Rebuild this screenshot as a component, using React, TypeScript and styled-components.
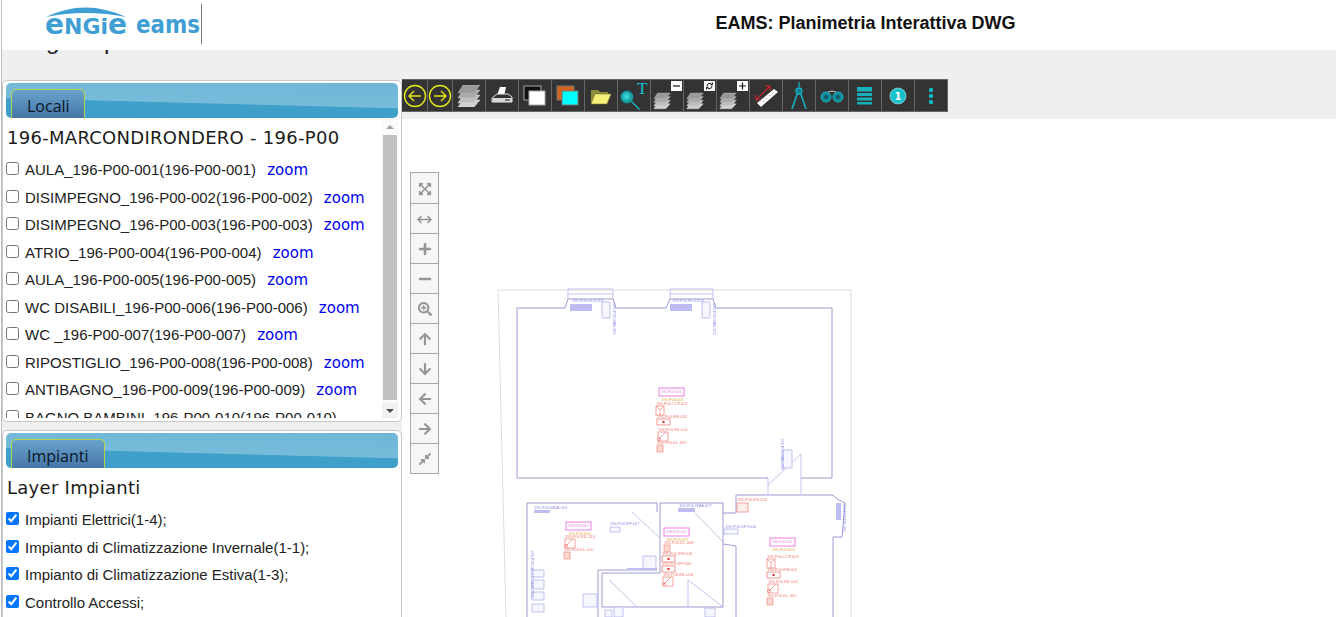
import React from 'react';
import styled, { createGlobalStyle } from 'styled-components';
import {
  FaArrowDown,
  FaArrowLeft,
  FaArrowRight,
  FaArrowUp,
  FaCompressAlt,
  FaExpandArrowsAlt,
  FaMinus,
  FaPlus,
  FaSearchPlus,
} from 'react-icons/fa';
import { TbArrowsHorizontal } from 'react-icons/tb';

const GlobalStyle = createGlobalStyle`
  html, body {
    margin: 0;
    padding: 0;
    height: 100%;
    overflow: hidden;
    background: #fff;
  }
  * { box-sizing: border-box; }
`;

const Page = styled.div`
  width: 1335px;
  height: 617px;
  margin-left: 1px;
  overflow: hidden;
  display: flex;
  flex-direction: column;
  border-left: 1px solid #bdbdbd;
  font-family: 'Liberation Sans', Arial, sans-serif;
`;

const Header = styled.header`
  flex: 0 0 50px;
  display: flex;
  align-items: flex-start;
  background: #fff;
`;

const LogoBox = styled.div`
  flex: 0 0 200px;
  height: 40px;
  margin-top: 4px;
  padding-left: 43px;
  border-right: 1px solid #777;
`;

const Title = styled.h1`
  flex: 1;
  margin: 13px 0 0;
  padding-left: 193px;
  text-align: center;
  font-size: 18px;
  line-height: 20px;
  font-weight: bold;
  color: #111;
`;

const Body = styled.div`
  flex: 1;
  display: flex;
  min-height: 0;
`;

const Sidebar = styled.aside`
  flex: 0 0 400px;
  display: flex;
  flex-direction: column;
  gap: 8px;
  background: #efefef;
  overflow: hidden;
`;

const ClippedHeading = styled.div`
  flex: none;
  height: 22px;
  overflow: hidden;
  padding-left: 44px;
  font-size: 24px;
  line-height: 24px;
  color: #222;
  word-spacing: 38px;
`;

const ClippedText = styled.div`
  margin-top: -21px;
`;

const Panel = styled.section<{ $height?: number }>`
  flex: ${({ $height }) => ($height ? `0 0 ${$height}px` : '0 0 300px')};
  background: #fff;
  border: 1px solid #c8c8c8;
  border-radius: 5px;
  padding: 2px 3px 3px;
  display: flex;
  flex-direction: column;
  overflow: hidden;
`;

const PanelBar = styled.div`
  flex: 0 0 35px;
  padding: 6px 0 0 5px;
  border-radius: 5px;
  display: flex;
  background: linear-gradient(181.5deg, #6fb5d6 0, #76bcda 55%, #3fa0ca 57%, #3d9dc8 100%);
`;

const Tab = styled.div<{ $width: number }>`
  width: ${({ $width }) => $width}px;
  height: 29px;
  padding: 5px 0 0 15px;
  border: 1px solid #b6d44a;
  border-bottom: 0;
  border-radius: 5px 5px 0 0;
  background: linear-gradient(#69a3cb, #4475a8);
  font-family: 'Open Sans', sans-serif;
  font-size: 16px;
  line-height: 22px;
  color: #0c1622;
`;

const ScrollArea = styled.div`
  flex: 1;
  display: flex;
  min-height: 0;
`;

const PanelContent = styled.div`
  flex: 1;
  min-width: 0;
  overflow: hidden;
`;

const PanelTitle = styled.h2`
  margin: 10px 0 8px 1px;
  font-family: 'DejaVu Sans', Verdana, sans-serif;
  font-size: 18px;
  line-height: 20px;
  font-weight: normal;
  letter-spacing: 0.28px;
  color: #1b1b1b;
`;

const Row = styled.label`
  display: block;
  height: 27.5px;
  line-height: 27.5px;
  font-size: 15px;
  color: #222;
`;

const RowName = styled.span`
  white-space: nowrap;
`;

const Check = styled.input.attrs({ type: 'checkbox' })`
  width: 13px;
  height: 13px;
  margin: 0 6px 0 0;
  vertical-align: 0;
  accent-color: #0075ff;
`;

const ZoomLink = styled.a`
  margin-left: 7px;
  font-family: 'DejaVu Sans', Verdana, sans-serif;
  font-size: 15px;
  color: #0000ee;
`;

const Scrollbar = styled.div`
  flex: 0 0 16px;
  display: flex;
  flex-direction: column;
  background: #fafafa;
`;

const ScrollButton = styled.div<{ $down?: boolean }>`
  flex: 0 0 ${({ $down }) => ($down ? 15 : 17)}px;
  display: flex;
  align-items: center;
  justify-content: center;
  ${({ $down }) => ($down ? 'background: #f1f1f1;' : '')}
  &::after {
    content: '';
    border-left: 4px solid transparent;
    border-right: 4px solid transparent;
    ${({ $down }) => ($down ? 'border-top: 4px solid #505050;' : 'border-bottom: 4px solid #a3a3a3;')}
  }
`;

const ScrollTrack = styled.div`
  flex: 1;
`;

const ScrollThumb = styled.div`
  height: 265px;
  margin: 0 1px;
  background: #c1c1c1;
`;

const Main = styled.main`
  flex: 1;
  min-width: 0;
  display: flex;
  flex-direction: column;
  background: #fff;
`;

const ToolStrip = styled.div`
  flex: 0 0 69px;
  padding-top: 29px;
  background: #efefef;
`;

const Toolbar = styled.div`
  display: inline-flex;
  height: 33px;
  background: #333;
  border: 1px solid #666;
  border-left-color: #333;
`;

const ToolButton = styled.button<{ $narrow?: boolean }>`
  width: ${({ $narrow }) => ($narrow ? 25 : 33)}px;
  padding: 0;
  border: 0;
  border-right: 1px solid #666;
  background: #333;
  display: flex;
  align-items: center;
  justify-content: center;
  &:last-child { border-right: 0; width: 32px; }
`;

const Canvas = styled.div`
  position: relative;
  flex: 1;
  min-height: 0;
  overflow: hidden;
  padding: 166px 0 0 88px;
`;

const NavColumn = styled.div`
  position: absolute;
  left: 8px;
  top: 53px;
  width: 29px;
  display: flex;
  flex-direction: column;
  border: 1px solid #a8a8a8;
  background: #f6f6f6;
`;

const NavButton = styled.div`
  flex: 0 0 30px;
  padding-top: 1px;
  display: flex;
  align-items: center;
  justify-content: center;
  color: #969696;
  font-size: 14px;
  border-bottom: 1px solid #a8a8a8;
  &:first-child { flex-basis: 31px; }
  &:last-child { flex-basis: 29px; border-bottom: 0; }
`;

const PlanSvg = styled.svg`
  display: block;
  flex: none;
  filter: blur(0.35px);
`;

const locali = [
  'AULA_196-P00-001(196-P00-001)',
  'DISIMPEGNO_196-P00-002(196-P00-002)',
  'DISIMPEGNO_196-P00-003(196-P00-003)',
  'ATRIO_196-P00-004(196-P00-004)',
  'AULA_196-P00-005(196-P00-005)',
  'WC DISABILI_196-P00-006(196-P00-006)',
  'WC _196-P00-007(196-P00-007)',
  'RIPOSTIGLIO_196-P00-008(196-P00-008)',
  'ANTIBAGNO_196-P00-009(196-P00-009)',
  'BAGNO BAMBINI_196-P00-010(196-P00-010)',
];

const impianti = [
  'Impianti Elettrici(1-4);',
  'Impianto di Climatizzazione Invernale(1-1);',
  'Impianto di Climatizzazione Estiva(1-3);',
  'Controllo Accessi;',
];

const Logo = () => (
  <svg width="156" height="36" viewBox="0 0 156 36" fontFamily="DejaVu Sans" fontWeight="bold" fill="#3f9fd4">
    <path d="M1 13 Q40 -6 81 13 Q40 5 1 13Z" />
    <text x="0" y="30" fontSize="22" textLength="82" lengthAdjust="spacingAndGlyphs">
      <tspan fontSize="28">e</tspan>NGi
      <tspan fontSize="28">e</tspan>
    </text>
    <text x="91" y="29" fontSize="25" textLength="64" lengthAdjust="spacingAndGlyphs">eams</text>
  </svg>
);

const CircleArrow = ({ dir }: { dir: 'l' | 'r' }) => (
  <svg width="24" height="24" viewBox="0 0 24 24" fill="none" stroke="#e6e61a" strokeWidth="1.4">
    <circle cx="12" cy="12" r="10.5" />
    {dir === 'l' ? <path d="M18 12H6M11 7l-5 5 5 5" /> : <path d="M6 12h12M13 7l5 5-5 5" />}
  </svg>
);

const layers = (
  <>
    <path d="M6 15h17l-6 7H1z" fill="#cfcfcf" stroke="#eee" strokeWidth=".5" />
    <path d="M6 10h17l-6 8H1z" fill="#bdbdbd" stroke="#e4e4e4" strokeWidth=".5" />
    <path d="M6 5h17l-6 8H1z" fill="#aaa" stroke="#ccc" strokeWidth=".5" />
    <path d="M6 0h17l-6 8H1z" fill="#999" stroke="#bbb" strokeWidth=".5" />
  </>
);

const Stack = () => (
  <svg width="24" height="22" viewBox="0 0 24 22">
    {layers}
  </svg>
);

const StackWith = ({ sign }: { sign: 'minus' | 'refresh' | 'plus' }) => (
  <svg width="32" height="31" viewBox="0 0 32 31">
    <g transform="translate(2 13) scale(.75 .72)">{layers}</g>
    <rect x="20" y="1" width="11" height="10" fill="#fff" />
    {sign === 'minus' && <path d="M22 6h7" stroke="#111" strokeWidth="1.2" />}
    {sign === 'plus' && <path d="M22 6h7M25.5 2.5v7" stroke="#111" strokeWidth="1.2" />}
    {sign === 'refresh' && <path d="M23 6a2.7 2.7 0 0 1 5-1.4M28 6a2.7 2.7 0 0 1-5 1.4M28.4 2.6v2.2h-2M22.6 9.4V7.2h2" fill="none" stroke="#111" strokeWidth="1" />}
  </svg>
);

const Printer = () => (
  <svg width="22" height="18" viewBox="0 0 22 18">
    <path d="M9 0h6l-1.5 7h-7z" fill="#fff" />
    <path d="M6 7h11l4 3v5H1v-4z" fill="#333" stroke="#e8e8e8" strokeWidth="1" />
    <path d="M2 11h19v4H1z" fill="#d8d8d8" />
    <path d="M14 13h5" stroke="#333" strokeWidth="1.2" />
  </svg>
);

const Windows = ({ back, front, stroke }: { back: string; front: string; stroke: string }) => (
  <svg width="24" height="24" viewBox="0 0 24 24">
    <rect x="1" y="2" width="17" height="14" fill={back} stroke={stroke} strokeWidth="1" />
    <rect x="6" y="7" width="16" height="14" fill={front} stroke={stroke} strokeWidth="1" />
  </svg>
);

const Folder = () => (
  <svg width="22" height="18" viewBox="0 0 22 18">
    <path d="M1 3h7l2 2h8v3H5L1 17z" fill="#8c8a3c" />
    <path d="M5 7h16l-4 10H1z" fill="#f7f17c" stroke="#7c7a30" strokeWidth=".6" />
  </svg>
);

const SearchText = () => (
  <svg width="31" height="30" viewBox="0 0 31 30">
    <defs>
      <radialGradient id="lens" cx=".45" cy=".45" r=".6">
        <stop offset="0" stopColor="#3ce6e6" />
        <stop offset="1" stopColor="#0d7f86" />
      </radialGradient>
    </defs>
    <circle cx="8" cy="16" r="6" fill="url(#lens)" stroke="#0f9aa0" />
    <path d="M12.5 20.5l8 8" stroke="#14c0c8" strokeWidth="1.3" />
    <text x="18" y="13" fontFamily="Liberation Serif" fontSize="17" fill="#18c4d8">T</text>
  </svg>
);

const Ruler = () => (
  <svg width="26" height="26" viewBox="0 0 26 26">
    <path d="M8 24l17-15-4-3L4 20z" fill="#fff" />
    <path d="M10 18l1 1M13 15l1 1M16 12l1 1M19 10l1 1" stroke="#888" strokeWidth=".8" />
    <path d="M3 17L17 3M3 17v-5M3 17h5M17 3h-5M17 3v5" fill="none" stroke="#c8262c" strokeWidth="1.2" />
  </svg>
);

const Compass = () => (
  <svg width="18" height="28" viewBox="0 0 18 28" fill="none" stroke="#16b0c0" strokeWidth="1.3">
    <path d="M9 0v5" />
    <circle cx="9" cy="9" r="3" fill="#0f7f8e" />
    <path d="M7.5 11L2 27M10.5 11L16 27" strokeWidth="1.6" />
  </svg>
);

const Binoculars = () => (
  <svg width="24" height="14" viewBox="0 0 24 14" fill="none">
    <circle cx="6" cy="8" r="5" fill="#0f8c98" stroke="#17b5c2" />
    <circle cx="6" cy="8" r="2" fill="#0b5c66" />
    <circle cx="18" cy="8" r="5" fill="#0f8c98" stroke="#17b5c2" />
    <circle cx="18" cy="8" r="2" fill="#0b5c66" />
    <path d="M8 3q4-2 8 0" stroke="#cfcfcf" />
  </svg>
);

const Lines = () => (
  <svg width="16" height="18" viewBox="0 0 16 18" fill="#17b0bd">
    <rect width="15" height="4.5" />
    <rect y="6" width="15" height="3" />
    <rect y="10.5" width="15" height="3" />
    <rect y="15" width="15" height="2.5" />
  </svg>
);

const Info = () => (
  <svg width="18" height="18" viewBox="0 0 18 18">
    <circle cx="9" cy="9" r="8" fill="#18c2cc" stroke="#bfeef0" strokeWidth=".6" />
    <text x="9" y="13" textAnchor="middle" fontFamily="DejaVu Sans" fontWeight="bold" fontSize="10" fill="#fff">1</text>
  </svg>
);

const Dots = () => (
  <svg width="6" height="18" viewBox="0 0 6 18" fill="#17b8c6">
    <circle cx="3" cy="3" r="2.2" />
    <circle cx="3" cy="9" r="2.2" />
    <circle cx="3" cy="15" r="2.2" />
  </svg>
);

const tools = [
  { narrow: true, icon: <CircleArrow dir="l" /> },
  { narrow: true, icon: <CircleArrow dir="r" /> },
  { icon: <Stack /> },
  { icon: <Printer /> },
  { icon: <Windows back="#111" front="#fff" stroke="#aaa" /> },
  { icon: <Windows back="#d2641e" front="#0ff" stroke="#777" /> },
  { icon: <Folder /> },
  { icon: <SearchText /> },
  { icon: <StackWith sign="minus" /> },
  { icon: <StackWith sign="refresh" /> },
  { icon: <StackWith sign="plus" /> },
  { icon: <Ruler /> },
  { icon: <Compass /> },
  { icon: <Binoculars /> },
  { icon: <Lines /> },
  { icon: <Info /> },
  { icon: <Dots /> },
];

const navIcons = [
  <FaExpandArrowsAlt />,
  <TbArrowsHorizontal size={17} strokeWidth={2.2} />,
  <FaPlus />,
  <FaMinus />,
  <FaSearchPlus />,
  <FaArrowUp />,
  <FaArrowDown />,
  <FaArrowLeft />,
  <FaArrowRight />,
  <FaCompressAlt />,
];

const WALL = '#9c9cd6';
const THIN = '#b4b4ee';
const RED = '#ee7f76';
const PINK = '#ea80e2';
const BLUE_TEXT = '#8e8ee6';

const walls = [
  'M517 308H565L568 299H613L616 308H666L670 299H713L716 308H832V478H801M768 478H517V308',
  'M527 617V503H657V512M660 538V503H723V513H736V495H833L837 499L845 503L842 537H833V617',
  'M723 513V607H602V573H660V538M723 544L736 546V617M598 617V570H657',
];

const thinLines = [
  'M768 485L801 454V494M768 478V494',
  'M632 512L660 538M695 513L723 542M609 580L637 607M688 580L723 607M688 580V607',
  'M568 289H613V299M568 289V299M670 289H713V299M670 289V299M568 294H613M670 294H713',
];

const fixtures = [
  'M602 302h8v16h-8zM702 302h8v16h-8zM783 450h9v18h-9zM610 527h10v5h-10zM724 529h14v5h-14z',
  'M532 570h12v7h-12zM532 580h12v9h-12zM532 592h12v8h-12zM532 604h12v8h-12z',
  'M643 556h13v13h-13zM583 594h14v13h-14zM614 607h9v10h-9zM705 608h10v9h-10zM605 610h7v7h-7z',
];

type Kind = 'ccp' | 'ifb' | 'inl' | 'ill';

type Device = { label: string; kind: Kind; x: number; y: number };

// room tags and the devices listed under them, in plan coordinates
const rooms: { x: number; y: number; tag: string; devices: Device[] }[] = [
  {
    x: 659, y: 388, tag: '196.P00.001',
    devices: [
      { label: '196.P00.CCP.001', kind: 'ccp', x: 656, y: 406 },
      { label: '196.P00.IFB.001', kind: 'ifb', x: 657, y: 419 },
      { label: '196.P00.INL.001', kind: 'inl', x: 658, y: 432 },
      { label: '196.P00.ILL.001', kind: 'ill', x: 657, y: 445 },
    ],
  },
  {
    x: 566, y: 522, tag: '196.P00.010',
    devices: [
      { label: '196.P00.INL.010', kind: 'inl', x: 565, y: 539 },
      { label: '196.P00.ILL.010', kind: 'ill', x: 564, y: 552 },
    ],
  },
  {
    x: 664, y: 528, tag: '196.P00.007',
    devices: [
      { label: '196.P00.ILL.008', kind: 'ill', x: 664, y: 545 },
      { label: '196.P00.IFB.008', kind: 'ifb', x: 662, y: 556 },
      { label: '196.P00.IFP.009', kind: 'ifb', x: 662, y: 566 },
      { label: '196.P00.INL.008', kind: 'inl', x: 663, y: 577 },
    ],
  },
  {
    x: 770, y: 538, tag: '196.P00.002',
    devices: [
      { label: '196.P00.CCP.002', kind: 'ccp', x: 767, y: 559 },
      { label: '196.P00.IFB.002', kind: 'ifb', x: 767, y: 572 },
      { label: '196.P00.INL.002', kind: 'inl', x: 768, y: 584 },
      { label: '196.P00.ILL.002', kind: 'ill', x: 767, y: 598 },
    ],
  },
];

const blueLabels: [string, number, number][] = [
  ['196.P00.HCV.001', 572, 302],
  ['196.P00.HCV.002', 672, 302],
  ['196.P00.WNA.010', 534, 509],
  ['196.P00.WAA.007', 679, 507],
  ['196.P00.IFP.007', 610, 525],
  ['196.P00.SFT.006', 725, 528],
];

const sideLabels: [string, number, number][] = [
  ['196.P00.SBB.001', 613, 303],
  ['196.P00.SBB.002', 713, 303],
  ['196.P00.SBB.003', 781, 438],
  ['196.P00.FN.001', 843, 503],
  ['196.P00.QE.010.SBB.0001', 531, 550],
];

const DeviceSymbol = ({ kind, x, y }: { kind: Kind; x: number; y: number }) => {
  if (kind === 'ccp') {
    return (
      <g fill="none" stroke={RED} strokeWidth=".7">
        <rect x={x} y={y} width={8} height={9} />
        <path d={`M${x} ${y}L${x + 4} ${y + 4}L${x + 8} ${y}M${x + 4} ${y + 4}V${y + 9}`} />
      </g>
    );
  }
  if (kind === 'ifb') {
    return (
      <g>
        <rect x={x} y={y} width={13} height={6} fill="none" stroke={RED} strokeWidth=".8" />
        <rect x={x + 5.5} y={y + 2} width={2} height={2} fill="#e82020" />
      </g>
    );
  }
  if (kind === 'inl') {
    return (
      <g fill="none" stroke={RED} strokeWidth=".7">
        <rect x={x} y={y} width={10} height={9} />
        <path d={`M${x + 1} ${y + 7}L${x + 8} ${y}`} />
        <circle cx={x + 1} cy={y + 7} r="1.6" />
      </g>
    );
  }
  return <rect x={x} y={y} width={6} height={7} fill="#fbd8d0" stroke={RED} strokeWidth=".6" />;
};

const Plan = () => (
  <PlanSvg width="370" height="332" viewBox="490 285 370 332" fontFamily="Liberation Sans" fontSize="4">
    <path d="M498 290H851V617M498 290L506 617" fill="none" stroke="#dcdcdc" />
    <path d={thinLines.join('')} fill="none" stroke={THIN} strokeWidth=".8" />
    <path d={walls.join('')} fill="none" stroke={WALL} strokeWidth="1" />
    <path d={fixtures.join('')} fill="#f6f6ff" stroke={THIN} strokeWidth=".8" />
    <path d="M570 304h22v7h-22zM670 304h22v7h-22zM534 510h16v3h-16zM678 508h17v4h-17zM836 503h5v17h-5zM627 568h30v1.5h-30z" fill="#bdbdf2" />
    {blueLabels.map(([label, x, y]) => (
      <text key={label} x={x} y={y} fill={BLUE_TEXT}>{label}</text>
    ))}
    {sideLabels.map(([label, x, y]) => (
      <text key={label} transform={`translate(${x} ${y}) rotate(90)`} fill={BLUE_TEXT}>{label}</text>
    ))}
    <text x="737" y="501" fill={RED}>196.P00.IFS.002</text>
    <rect x="737" y="503" width="11" height="9" fill="#fdeeee" stroke={RED} strokeWidth=".7" />
    {rooms.map((room) => (
      <g key={room.tag}>
        <rect x={room.x} y={room.y} width={25} height={8} fill="#fff" stroke={PINK} strokeWidth="1" />
        <text x={room.x + 2} y={room.y + 5.4} fontSize="3.6" fill={PINK}>{room.tag}</text>
        <text x={room.x + 2} y={room.y + 13} fill="#e8a848">{room.tag}</text>
        {room.devices.map((device) => (
          <g key={device.label}>
            <text x={device.x} y={device.y - 1} fill={RED}>{device.label}</text>
            <DeviceSymbol kind={device.kind} x={device.x} y={device.y} />
          </g>
        ))}
      </g>
    ))}
  </PlanSvg>
);

export default function App() {
  return (
    <Page>
      <GlobalStyle />
      <Header>
        <LogoBox>
          <Logo />
        </LogoBox>
        <Title>EAMS: Planimetria Interattiva DWG</Title>
      </Header>
      <Body>
        <Sidebar>
          <ClippedHeading>
            <ClippedText>g p</ClippedText>
          </ClippedHeading>
          <Panel $height={342}>
            <PanelBar>
              <Tab $width={74}>Locali</Tab>
            </PanelBar>
            <ScrollArea>
              <PanelContent>
                <PanelTitle>196-MARCONDIRONDERO - 196-P00</PanelTitle>
                {locali.map((name) => (
                  <Row key={name}>
                    <Check />
                    <RowName>{name}</RowName> <ZoomLink>zoom</ZoomLink>
                  </Row>
                ))}
              </PanelContent>
              <Scrollbar>
                <ScrollButton />
                <ScrollTrack>
                  <ScrollThumb />
                </ScrollTrack>
                <ScrollButton $down />
              </Scrollbar>
            </ScrollArea>
          </Panel>
          <Panel>
            <PanelBar>
              <Tab $width={94}>Impianti</Tab>
            </PanelBar>
            <PanelContent>
              <PanelTitle>Layer Impianti</PanelTitle>
              {impianti.map((name) => (
                <Row key={name}>
                  <Check defaultChecked />
                  <RowName>{name}</RowName>
                </Row>
              ))}
            </PanelContent>
          </Panel>
        </Sidebar>
        <Main>
          <ToolStrip>
            <Toolbar>
              {tools.map((tool, i) => (
                <ToolButton key={i} $narrow={tool.narrow}>
                  {tool.icon}
                </ToolButton>
              ))}
            </Toolbar>
          </ToolStrip>
          <Canvas>
            <Plan />
            <NavColumn>
              {navIcons.map((icon, i) => (
                <NavButton key={i}>{icon}</NavButton>
              ))}
            </NavColumn>
          </Canvas>
        </Main>
      </Body>
    </Page>
  );
}
